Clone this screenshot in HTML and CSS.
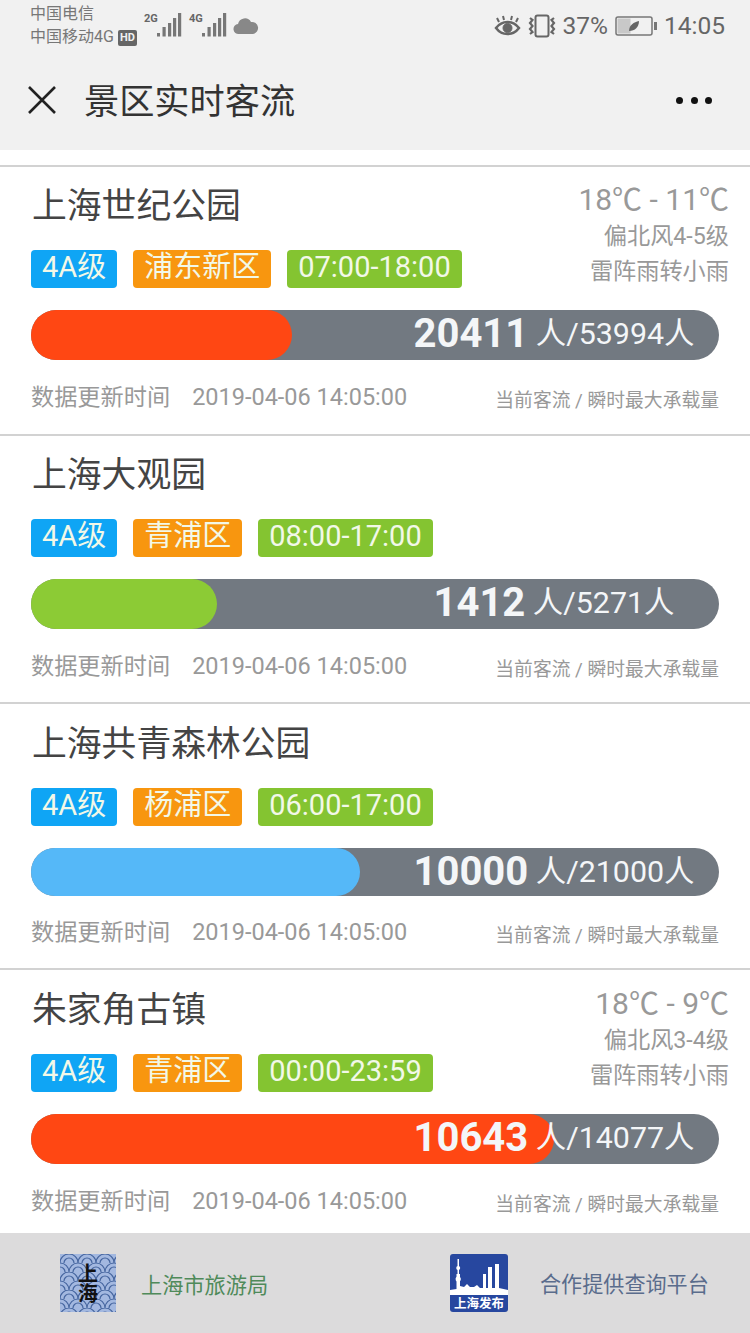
FILE: index.html

```html
<!DOCTYPE html>
<html lang="zh-CN">
<head>
  <meta charset="UTF-8">
  <title>景区实时客流</title>
  <link rel="stylesheet" href="styles.css">
</head>
<body>

<header class="top">
  <div class="status">
    <div class="carriers">
      <div>中国电信</div>
      <div>中国移动4G<span class="hd">HD</span></div>
    </div>
    <div class="signal">
      <span class="net">2G</span>
      <svg width="26" height="24" viewBox="0 0 26 24"><path d="M1 20h3v3.500H1zM6.500 14h3.200v9.500H6.500zM12 10h3.200v13.500H12zM17 5h3.200v18.500H17zM22 0h3.200v23.500H22z" fill="#777"/></svg>
    </div>
    <div class="signal">
      <span class="net">4G</span>
      <svg width="26" height="24" viewBox="0 0 26 24"><path d="M1 20h3v3.500H1zM6.500 14h3.200v9.500H6.500zM12 10h3.200v13.500H12zM17 5h3.200v18.500H17zM22 0h3.200v23.500H22z" fill="#777"/></svg>
    </div>
    <svg class="cloud" width="26" height="18" viewBox="0 0 26 18"><path d="M6 17a5 5 0 0 1-1-10 7 7 0 0 1 13-2 6 6 0 0 1 2 12z" fill="#888"/></svg>
    <div class="status-right">
      <svg width="27" height="24" viewBox="0 0 27 24" fill="none" stroke="#666"><path d="M2 14c6-8 17-8 23 0-6 8-17 8-23 0z" stroke-width="2.500"/><circle cx="13.500" cy="14" r="4.500" fill="#666"/><path d="M5 8 3 4M10 6 9 2M17 6l1-4M22 8l2-4" stroke-width="2"/></svg>
      <svg width="28" height="24" viewBox="0 0 28 24" fill="none" stroke="#666" stroke-width="2"><rect x="7.500" y="1.500" width="13" height="21" rx="2"/><path d="M2 4l2.500 2-2.500 3 2.500 3-2.500 3 2.500 3-2.500 2M26 4l-2.500 2 2.500 3-2.500 3 2.500 3-2.500 3 2.500 2" stroke-width="2.200"/></svg>
      <span class="pct">37%</span>
      <svg width="42" height="20" viewBox="0 0 42 20"><rect x="1" y="1" width="36" height="18" rx="2" fill="none" stroke="#777" stroke-width="1.500"/><rect x="2.500" y="2.500" width="13" height="15" fill="#c8c8c8"/><path d="M14 15c0-6 5-9 10-10 0 6-4 10-10 10z" fill="#666"/><rect x="39" y="6" width="3" height="8" fill="#777"/></svg>
      <span class="time">14:05</span>
    </div>
  </div>
  <div class="nav">
    <svg class="close" width="30" height="30" viewBox="0 0 30 30"><path d="M2 2l26 26M28 2 2 28" stroke="#222" stroke-width="2.600" fill="none"/></svg>
    <div class="nav-title">景区实时客流</div>
    <div class="dots"><i></i><i></i><i></i></div>
  </div>
</header>
<div class="gap"></div>

<section class="card">
  <div class="card-top">
    <div class="card-main">
      <h2>上海世纪公园</h2>
      <div class="tags">
        <span class="tag blue">4A级</span>
        <span class="tag orange">浦东新区</span>
        <span class="tag green">07:00-18:00</span>
      </div>
    </div>
    <div class="weather">
      <div class="temp">18℃ - 11℃</div>
      <div>偏北风4-5级</div>
      <div>雷阵雨转小雨</div>
    </div>
  </div>
  <div class="bar">
    <div class="fill red" style="width: 37.9%"></div>
    <div class="count"><b>20411</b> 人/53994人</div>
  </div>
  <div class="meta">
    <span>数据更新时间<span class="date">2019-04-06 14:05:00</span></span>
    <span class="legend">当前客流 / 瞬时最大承载量</span>
  </div>
</section>

<section class="card">
  <div class="card-top">
    <div class="card-main">
      <h2>上海大观园</h2>
      <div class="tags">
        <span class="tag blue">4A级</span>
        <span class="tag orange">青浦区</span>
        <span class="tag green">08:00-17:00</span>
      </div>
    </div>
  </div>
  <div class="bar">
    <div class="fill lime" style="width: 27%"></div>
    <div class="count"><b>1412</b> 人/5271人</div>
  </div>
  <div class="meta">
    <span>数据更新时间<span class="date">2019-04-06 14:05:00</span></span>
    <span class="legend">当前客流 / 瞬时最大承载量</span>
  </div>
</section>

<section class="card card-third">
  <div class="card-top">
    <div class="card-main">
      <h2>上海共青森林公园</h2>
      <div class="tags">
        <span class="tag blue">4A级</span>
        <span class="tag orange">杨浦区</span>
        <span class="tag green">06:00-17:00</span>
      </div>
    </div>
  </div>
  <div class="bar">
    <div class="fill sky" style="width: 47.8%"></div>
    <div class="count"><b>10000</b> 人/21000人</div>
  </div>
  <div class="meta">
    <span>数据更新时间<span class="date">2019-04-06 14:05:00</span></span>
    <span class="legend">当前客流 / 瞬时最大承载量</span>
  </div>
</section>

<section class="card card-last">
  <div class="card-top">
    <div class="card-main">
      <h2>朱家角古镇</h2>
      <div class="tags">
        <span class="tag blue">4A级</span>
        <span class="tag orange">青浦区</span>
        <span class="tag green">00:00-23:59</span>
      </div>
    </div>
    <div class="weather">
      <div class="temp">18℃ - 9℃</div>
      <div>偏北风3-4级</div>
      <div>雷阵雨转小雨</div>
    </div>
  </div>
  <div class="bar">
    <div class="fill red" style="width: 76%"></div>
    <div class="count"><b>10643</b> 人/14077人</div>
  </div>
  <div class="meta">
    <span>数据更新时间<span class="date">2019-04-06 14:05:00</span></span>
    <span class="legend">当前客流 / 瞬时最大承载量</span>
  </div>
</section>

<footer class="foot">
  <div class="foot-item foot-left">
    <svg width="56" height="58" viewBox="0 0 56 58">
      <defs>
        <pattern id="waves" width="18" height="18" patternUnits="userSpaceOnUse">
          <rect width="18" height="18" fill="#a3b8e0"/>
          <path d="M0 9a9 9 0 0 1 18 0M4 9a5 5 0 0 1 10 0M-9 18a9 9 0 0 1 18 0M-5 18a5 5 0 0 1 10 0M9 18a9 9 0 0 1 18 0M13 18a5 5 0 0 1 10 0" fill="none" stroke="#45659f" stroke-width="1.200"/>
        </pattern>
      </defs>
      <rect width="56" height="58" fill="url(#waves)"/>
      <text x="28" y="9" class="seal">上海</text>
    </svg>
    <span class="foot-green">上海市旅游局</span>
  </div>
  <div class="foot-item foot-right">
    <svg width="58" height="58" viewBox="0 0 58 58">
      <rect width="58" height="58" rx="3" fill="#27479f"/>
      <path d="M0 41V36L6.500 35V20H7.500V5H9V20H10V32L14 33 17 30 20 33H24L27 31 30 34H33V20H36V34H38V13H42V34H45V10H49V34L58 36V41Z" fill="#fff"/>
      <circle cx="8.200" cy="14" r="2" fill="#fff"/>
      <circle cx="8.200" cy="25" r="2.600" fill="#fff"/>
      <text x="29" y="54" class="badge-text">上海发布</text>
    </svg>
    <span class="foot-blue">合作提供查询平台</span>
  </div>
</footer>

</body>
</html>
```

FILE: styles.css

```css
* {
  box-sizing: border-box;
}
body {
  margin: 0;
  width: 750px;
  height: 1333px;
  overflow: hidden;
  background-color: #fff;
  font-family: Roboto, 'Noto Sans CJK SC', sans-serif;
}
.top {
  height: 150px;
  background-color: #f1f1f1;
}
.status {
  height: 50px;
  display: flex;
  align-items: flex-start;
  padding: 2px 25px 0 30px;
  color: #777;
}
.carriers {
  width: 114px;
  font-size: 16px;
  line-height: 23px;
  white-space: nowrap;
}
.hd {
  display: inline-block;
  margin-left: 4px;
  padding: 0 2px;
  background-color: #666;
  color: #f1f1f1;
  font-size: 11px;
  font-weight: bold;
  line-height: 16px;
  border-radius: 2px;
  vertical-align: 1px;
}
.signal {
  display: flex;
  padding-top: 11px;
  width: 45px;
}
.signal svg {
  flex: none;
  margin-left: -1px;
}
.net {
  width: 13px;
  font-size: 11px;
  font-weight: bold;
  line-height: 12px;
  color: #666;
}
.cloud {
  margin: 15px 0 0 -1px;
}
.status-right {
  margin-left: auto;
  display: flex;
  align-items: center;
  height: 47px;
  gap: 7px;
  font-size: 24.500px;
  color: #666;
}
.nav {
  height: 100px;
  display: flex;
  align-items: center;
  padding: 0 38px 0 27px;
}
.close {
  flex: none;
}
.nav-title {
  margin-left: 27px;
  padding-top: 3px;
  font-size: 35.200px;
  line-height: 100px;
  color: #333;
}
.dots {
  margin-left: auto;
  display: flex;
  gap: 7.500px;
}
.dots i {
  width: 7px;
  height: 7px;
  border-radius: 50%;
  background-color: #111;
}
.gap {
  height: 15px;
}

.card {
  height: 268.500px;
  padding: 15px 31px 0;
  border-top: 2px solid #d2d2d2;
}
.card-third {
  height: 266px;
  padding-top: 16px;
}
.card-last {
  height: 265px;
  padding-top: 16px;
}
.card-top {
  display: flex;
  justify-content: space-between;
  height: 106px;
}
h2 {
  margin: 0 0 21px;
  padding: 1px 0 0 1px;
  font-size: 34.800px;
  font-weight: normal;
  line-height: 46px;
  color: #444;
}
.tags {
  display: flex;
  gap: 16px;
}
.tag {
  height: 38px;
  padding: 0 11px;
  border-radius: 4px;
  color: #f2f8e8;
  font-size: 29px;
  line-height: 35px;
  white-space: nowrap;
}
.tag.blue {
  background-color: #0fa5f5;
}
.tag.orange {
  background-color: #f8960f;
}
.tag.green {
  background-color: #84c431;
}
.weather {
  margin: -2px -10px 0 0;
  text-align: right;
  color: #999;
  font-size: 23.200px;
  line-height: 35px;
}
.temp {
  font-size: 30px;
  line-height: 39px;
}

.bar {
  position: relative;
  height: 50px;
  margin-top: 22px;
  background-color: #727981;
  border-radius: 25px;
  display: flex;
  justify-content: flex-end;
}
.card-third .bar {
  height: 48px;
}
.fill {
  position: absolute;
  left: 0;
  top: 0;
  bottom: 0;
  border-radius: 25px;
}
.fill.red {
  background-color: #ff4713;
}
.fill.lime {
  background-color: #8ccb35;
}
.fill.sky {
  background-color: #55b8f8;
}
.count {
  position: relative;
  width: 330px;
  text-align: center;
  color: #f4f6f8;
  font-size: 30.400px;
  line-height: 48px;
  white-space: nowrap;
}
.count b {
  font-size: 40px;
  line-height: 40px;
  vertical-align: -3px;
}
.meta {
  margin-top: 17px;
  display: flex;
  justify-content: space-between;
  align-items: center;
  color: #999;
  font-size: 23.200px;
  line-height: 32px;
}
.card-third .meta {
  margin-top: 16px;
}
.card-last .meta {
  margin-top: 17px;
}
.date {
  margin-left: 22px;
  font-size: 23.500px;
}
.legend {
  font-size: 18.800px;
  padding-top: 8px;
}

.foot {
  height: 100px;
  background-color: #dcdbdc;
  display: flex;
  align-items: center;
  padding-left: 60px;
}
.foot-item {
  display: flex;
  align-items: center;
}
.foot-left {
  width: 390px;
}
.foot-green {
  margin-left: 25px;
  font-size: 21.200px;
  color: #4f8a5a;
}
.foot-blue {
  margin-left: 32px;
  font-size: 21.100px;
  color: #5a6c8c;
}
.seal {
  font-family: 'Noto Sans CJK SC', sans-serif;
  font-size: 20px;
  font-weight: bold;
  fill: #111;
  writing-mode: vertical-rl;
}
.badge-text {
  font-family: 'Noto Sans CJK SC', sans-serif;
  font-size: 12.500px;
  font-weight: bold;
  fill: #fff;
  text-anchor: middle;
}
```
